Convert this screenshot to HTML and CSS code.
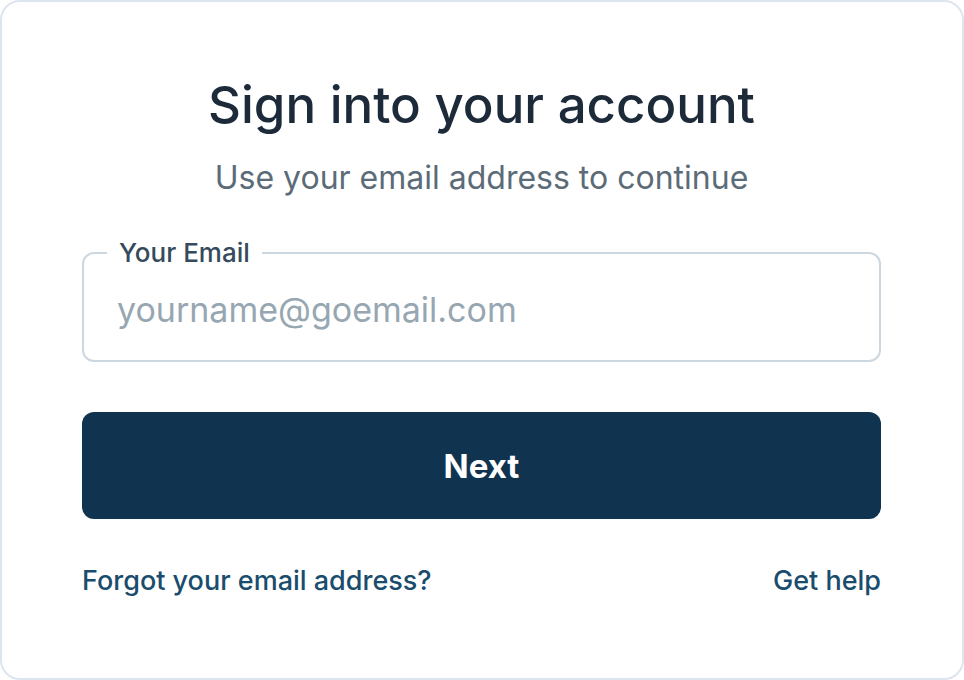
FILE: index.html
```html
<!DOCTYPE html>
<html lang="en">
<head>
<meta charset="utf-8">
<title>Sign in</title>
<link rel="stylesheet" href="styles.css">
</head>
<body>
<main class="card">
  <h1 class="title">Sign into your account</h1>
  <p class="subtitle">Use your email address to continue</p>
  <form class="form">
    <fieldset class="field">
      <legend class="field-label">Your Email</legend>
      <input class="field-input" type="email" placeholder="yourname@goemail.com">
    </fieldset>
    <button class="btn" type="button">Next</button>
  </form>
  <div class="links">
    <a class="link" href="#">Forgot your email address?</a>
    <a class="link" href="#">Get help</a>
  </div>
</main>
</body>
</html>
```
FILE: styles.css
```css
* { box-sizing: border-box; }
html, body { margin: 0; padding: 0; background: #ffffff; }
body { font-family: Inter, "Noto Sans", sans-serif; }

.card {
  width: 964px;
  height: 680px;
  border: 2px solid #dde5ee;
  border-radius: 20px;
  padding: 73px 81px 0 80px;
  display: flex;
  flex-direction: column;
}

.title {
  margin: 0;
  text-align: center;
  font-size: 51px;
  line-height: 60px;
  font-weight: 500;
  color: #1c2a39;
}

.subtitle {
  margin: 23px 0 0;
  text-align: center;
  font-size: 32px;
  line-height: 40px;
  font-weight: 400;
  color: #5b6b78;
}

.form {
  margin-top: 40px;
  display: flex;
  flex-direction: column;
}

.field {
  margin: 0;
  padding: 0 23px 10px;
  border: 2px solid #cdd7e0;
  border-radius: 12px;
  min-inline-size: 0;
}

.field-label {
  padding: 0 12px;
  font-size: 26px;
  line-height: 30px;
  font-weight: 500;
  color: #354a5c;
}

.field-input {
  display: block;
  width: 100%;
  height: 82px;
  border: 0;
  outline: none;
  padding: 0 10px;
  font-family: inherit;
  font-size: 34px;
  color: #1d2a39;
  background: transparent;
}
.field-input::placeholder { color: #97a7b2; }

.btn {
  margin-top: 50px;
  height: 107px;
  border: 0;
  border-radius: 12px;
  background: #10344f;
  color: #ffffff;
  font-family: inherit;
  font-size: 33px;
  font-weight: 700;
  cursor: pointer;
}

.links {
  margin-top: 45px;
  display: flex;
  justify-content: space-between;
  align-items: center;
}

.link {
  font-size: 27px;
  line-height: 34px;
  font-weight: 500;
  color: #1a4d6d;
  text-decoration: none;
}
```
